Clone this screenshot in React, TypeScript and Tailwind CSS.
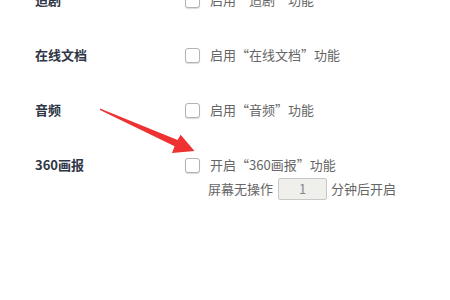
import * as React from "react"

type Row = {
    label: string
    text: string
    extra?: boolean
}

const rows: Row[] = [
    { label: "追剧", text: "启用“追剧”功能" },
    { label: "在线文档", text: "启用“在线文档”功能" },
    { label: "音频", text: "启用“音频”功能" },
    { label: "360画报", text: "开启“360画报”功能", extra: true },
]

function Checkbox() {
    return (
        <span className="block h-[15px] w-[15px] shrink-0 rounded-[3px] border border-[#b3b3b3] bg-white shadow-[0_1px_1px_rgba(0,0,0,0.15)]" />
    )
}

export default function App() {
    return (
        <div
            className="relative h-[300px] w-[450px] overflow-hidden bg-white text-[13px]"
            style={{ fontFamily: '"Noto Sans CJK SC", "Microsoft YaHei", sans-serif' }}
        >
            <div className="-mt-[10px] flex flex-col gap-[35px]">
                {rows.map((row) => (
                    <div key={row.label} className="flex">
                        <div className="w-[185px] shrink-0 pl-[35px] text-[13px] font-bold leading-[20px] text-[#2f3645]">
                            {row.label}
                        </div>
                        <div className="flex flex-col">
                            <div className="flex h-[20px] items-center gap-[10px]">
                                <Checkbox />
                                <span className="leading-[20px] text-[#666]">{row.text}</span>
                            </div>
                            {row.extra && (
                                <div className="ml-[23px] mt-[3px] flex h-[22px] items-center text-[#666]">
                                    <span>屏幕无操作</span>
                                    <div className="ml-[5px] flex h-[22px] w-[49px] items-center justify-center rounded-[2px] border border-[#c8c8c8] bg-[#efefec] text-[#888]">
                                        1
                                    </div>
                                    <span className="ml-[4px]">分钟后开启</span>
                                </div>
                            )}
                        </div>
                    </div>
                ))}
            </div>

            <svg className="pointer-events-none absolute left-0 top-0" width="450" height="300" viewBox="0 0 450 300">
                <polygon
                    points="100,108.4 177.6,140 180.6,134.8 194.5,151 172,153 174.6,146.2 100,110"
                    fill="#ee3131"
                />
            </svg>
        </div>
    )
}
